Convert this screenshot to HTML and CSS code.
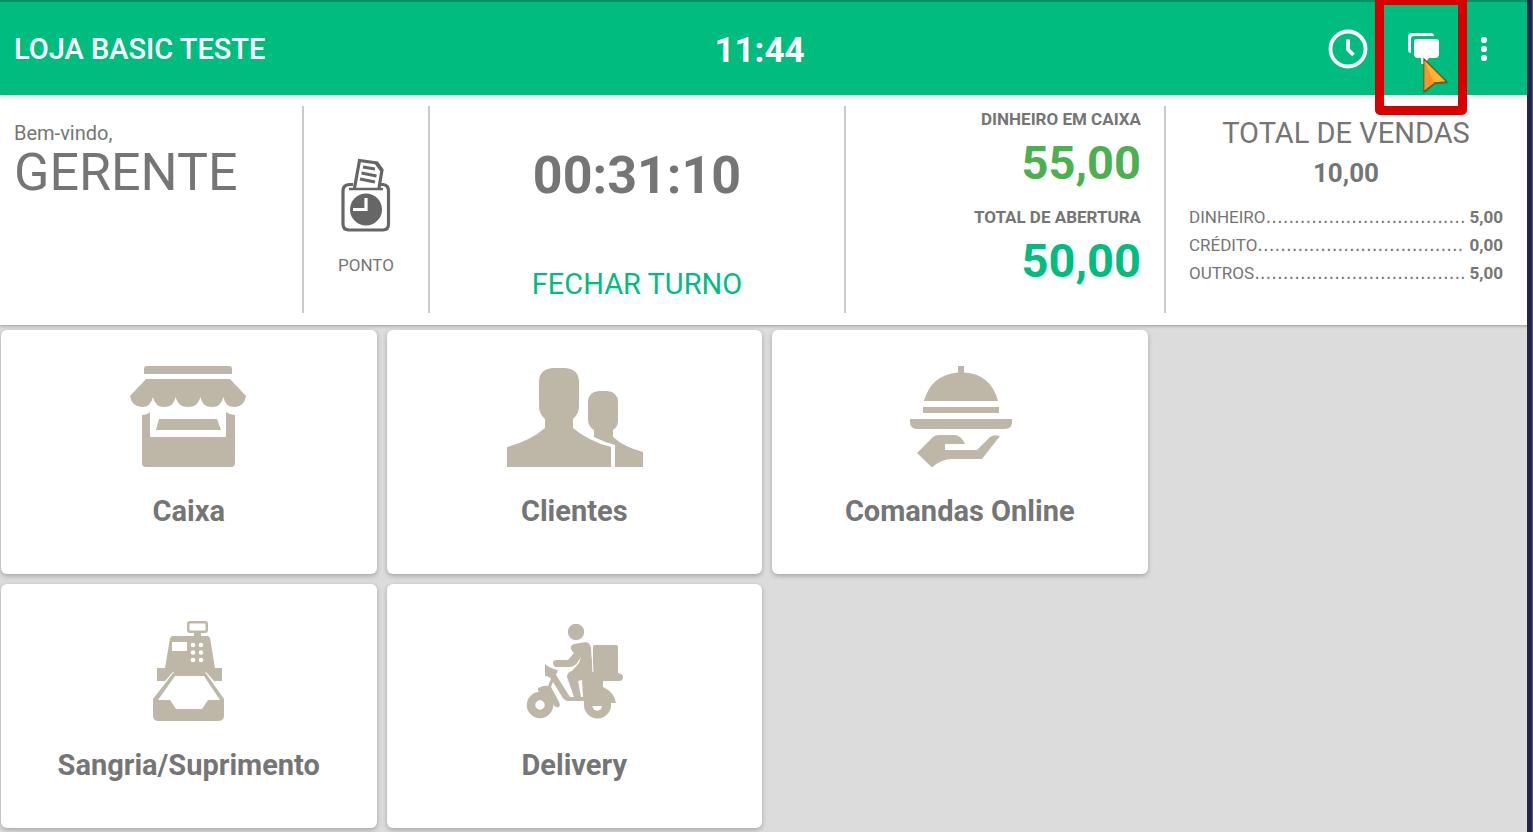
FILE: index.html
```
<!DOCTYPE html>
<html lang="pt-br">

<head>
    <meta charset="UTF-8">
    <meta name="viewport" content="width=device-width, initial-scale=1.0">
    <title>Loja Basic Teste</title>

    <link rel="stylesheet" href="styles.css">
</head>

<body>
    <header class="topo">
        <h1 class="loja">LOJA BASIC TESTE</h1>
        <time class="hora">11:44</time>
        <div class="acoes">
            <button type="button" class="btn-icone" aria-label="Turno">
                <svg width="40" height="40" viewBox="0 0 40 40" fill="none" stroke="#fff">
                    <circle cx="20" cy="20" r="17.500" stroke-width="3.800" />
                    <path d="M20 10.500V20.500L25.500 26" stroke-width="3.800" />
                </svg>
            </button>
            <div class="destaque">
                <button type="button" class="btn-icone" aria-label="Mensagens">
                    <svg width="34" height="34" viewBox="0 0 34 34" fill="#fff">
                        <path d="M1 21V5Q1 1 5 1H24Q27 1 27 4H7Q4 4 4 7V21Q1 21 1 18Z" />
                        <path d="M10 7H29Q32 7 32 10V22Q32 26 28 26H22L17 32H14V26H10Q7 25 7 22V10Q7 7 10 7Z" />
                    </svg>
                </button>
                <svg class="cursor" width="28" height="38" viewBox="0 0 28 38">
                    <path d="M3 3L26 26.500L13 27.500L3 36Z" fill="#1b4d35" opacity=".35" />
                    <path d="M2 2L25 25L12 26L2 34.500Z" fill="#fcb62c" stroke="#76501c" stroke-width="1.300" />
                    <path d="M2.600 4L12 26L2.600 33Z" fill="#f7952a" />
                </svg>
            </div>
            <button type="button" class="btn-icone btn-menu" aria-label="Mais opções">
                <svg width="8" height="26" viewBox="0 0 8 26" fill="#fff">
                    <circle cx="4" cy="4" r="3.100" />
                    <circle cx="4" cy="13" r="3.100" />
                    <circle cx="4" cy="22" r="3.100" />
                </svg>
            </button>
        </div>
    </header>

    <section class="resumo">
        <div class="bloco usuario">
            <p class="saudacao">Bem-vindo,</p>
            <p class="nome">GERENTE</p>
        </div>

        <button type="button" class="bloco ponto">
            <svg width="50" height="74" viewBox="0 0 50 74" fill="none" stroke="#666" stroke-width="3.200">
                <path d="M12 26.500H8Q2 27 2 33V66Q2 72 8 72H42Q47.500 72 47.500 66V33Q47.500 27 42 26.500H39" />
                <path d="M8 31H42" stroke-width="2.600" />
                <path d="M13.500 30L18.500 2.500L36 5L41 12L38 30" />
                <path d="M35 5L41 13" />
                <path d="M22 9L34 11M20.500 15L35.500 18M19 21L34 24" stroke-width="3" />
                <circle cx="25" cy="51.500" r="16" fill="#666" stroke="none" />
                <path d="M25 40V51.500H12" stroke="#fff" stroke-width="3.200" />
            </svg>
            <span>PONTO</span>
        </button>

        <div class="bloco turno">
            <p class="tempo">00:31:10</p>
            <button type="button" class="btn-fechar">FECHAR TURNO</button>
        </div>

        <dl class="bloco valores">
            <dt>DINHEIRO EM CAIXA</dt>
            <dd class="em-caixa">55,00</dd>
            <dt>TOTAL DE ABERTURA</dt>
            <dd class="abertura">50,00</dd>
        </dl>

        <div class="bloco vendas">
            <h2>TOTAL DE VENDAS</h2>
            <p class="total">10,00</p>
            <ul>
                <li><span>DINHEIRO</span><span class="pontos" aria-hidden="true">...................................</span><b>5,00</b></li>
                <li><span>CRÉDITO</span><span class="pontos" aria-hidden="true">....................................</span><b>0,00</b></li>
                <li><span>OUTROS</span><span class="pontos" aria-hidden="true">.....................................</span><b>5,00</b></li>
            </ul>
        </div>
    </section>

    <main class="menu">
        <button type="button" class="cartao">
            <svg width="140" height="104" viewBox="1 0 140 104" fill="#beb7a7">
                <path d="M26 10V5Q26 2 29 2H111Q114 2 114 5V10Z" />
                <path d="M28 15H112L128 32Q126 43 117 43Q107 43 105.500 33Q103 43 94 43Q84 43 82.500 33Q80 43 70 43Q60 43 57.500 33Q56 43 46 43Q37 43 35 33Q33 43 24 43Q14 43 12 32Z" />
                <path d="M24 51Q29 51 32 48V73H108V48Q112 51 117 51V99Q117 103 113 103H28Q24 103 24 99Z" />
                <path d="M41 55H99L103 66H38Z" />
            </svg>
            <span>Caixa</span>
        </button>

        <button type="button" class="cartao">
            <svg width="140" height="104" viewBox="-1 0 140 104" fill="#beb7a7">
                <path d="M48 4H60Q74 5 74 18V42Q74 50 68 55V64Q83 77 106 83V103H2V83Q25 77 40 64V55Q34 50 34 42V18Q34 5 48 4Z" />
                <path d="M94 27H102Q113 28 113 38V57Q113 63 108 66V73Q119 83 138 88V103H110V81Q99 78 89 73V66Q83 62 83 56V38Q83 28 94 27Z" />
            </svg>
            <span>Clientes</span>
        </button>

        <button type="button" class="cartao">
            <svg width="140" height="104" viewBox="-1 0 140 104" fill="#beb7a7">
                <path d="M67 2H73V8.500Q100 10 107 37H33Q40 11 67 8.500Z" />
                <path d="M32 43H108V49H32Z" />
                <path d="M19 55H121V58Q121 65 114 65H26Q19 65 19 58Z" />
                <path d="M26 89L42 73Q44 71 48 71H63Q70 71 74 80H54V86H86L99 73Q103 70 109 72L91 95H61Q50 95 41 103.500Z" />
            </svg>
            <span>Comandas Online</span>
        </button>

        <button type="button" class="cartao inicio-linha">
            <svg width="140" height="104" viewBox="2 -1 140 104" fill="#beb7a7" fill-rule="evenodd">
                <path d="M73 2H88Q91 2 91 5V11Q91 14 88 14H84V17H91L93 19L98 49H105V62H97L89 53H56L48 62H40V49H48L53 19L55 17H77V14H73Q70 14 70 11V5Q70 2 73 2ZM72.500 4.500V11.500H88.500V4.500ZM55 23V32H70V23Z" />
                <g fill="#fff">
                    <circle cx="76" cy="26" r="2.300" />
                    <circle cx="84" cy="26" r="2.300" />
                    <circle cx="76" cy="33.500" r="2.300" />
                    <circle cx="84" cy="33.500" r="2.300" />
                    <circle cx="76" cy="41" r="2.300" />
                    <circle cx="84" cy="41" r="2.300" />
                </g>
                <path d="M57 53H88L107 80V97Q107 102 101 102H42Q36 102 36 97V80ZM58 57L41 81H53L59 90H85L91 81H103L87 57Z" />
            </svg>
            <span>Sangria/Suprimento</span>
        </button>

        <button type="button" class="cartao">
            <svg width="140" height="104" viewBox="-1 0 140 104" fill="#beb7a7">
                <circle cx="71" cy="14" r="8.200" />
                <path d="M69 26L81 24Q85 25 86 30L88 55H98V83H64Q59 83 56 77L48 64L46 69L53 82Q56 87 54 89Q50 90 48 86L45 79Q42 75 37 75Q32 74 33 70Q39 67 43 68L46 61Q44 58 40 58V46Q44 50 53 52L51 57L65 79H69L62 59Q62 54 67 53L74 45L76 39L72 45Q69 49 64 49L51 49Q48 48 48 45Q48 42 52 42L63 42L69 35Q65 32 66 28Z" />
                <path d="M88 29Q88 27 90 27H111Q113 27 113 29V55Q118 56 118 59Q118 63 114 63H98V69Q109 74 111 85H83V55H88Z" />
                <path d="M73 63L76 79H78L77 62Z" fill="#fff" />
                <path d="M87 33L88 54" fill="none" stroke="#fff" />
                <circle cx="35" cy="87" r="9" fill="none" stroke="#beb7a7" stroke-width="8.500" />
                <path d="M79 80H106V87A13.500 13.500 0 0 1 79 87Z" />
                <path d="M87.500 88H97A4.500 4.500 0 0 1 87.500 88Z" fill="#fff" />
            </svg>
            <span>Delivery</span>
        </button>
    </main>

</body>

</html>
```
FILE: styles.css
```
*,
*::before {
    box-sizing: border-box;
}

body {
    margin: 0;
    min-height: 100vh;
    background-color: #dcdcdc;
    color: #757575;
    font-family: Roboto, "Liberation Sans", sans-serif;
}

/* faixa escura na lateral direita */
body::after {
    content: "";
    position: fixed;
    top: 0;
    right: 0;
    bottom: 0;
    width: 5px;
    background-color: #22264a;
    border-right: 1px solid #5c5f78;
}

h1, h2, p, dl, dd, ul {
    margin: 0;
    padding: 0;
    font-weight: normal;
}

button {
    margin: 0;
    padding: 0;
    border: none;
    background: none;
    color: inherit;
    font-family: inherit;
    cursor: pointer;
}

svg {
    display: block;
}

.topo {
    position: relative;
    display: grid;
    grid-template-columns: 1fr auto 1fr;
    align-items: center;
    height: 95px;
    padding: 0 28px 0 14px;
    background-color: #00bc7f;
    border-top: 2px solid #069061;
    box-shadow: 0 2px 6px rgba(0, 0, 0, 0.12);
    color: white;
}

.topo .loja {
    font-size: 29px;
    font-weight: 500;
}

.topo .hora {
    padding-top: 4px;
    font-size: 35px;
    font-weight: bold;
}

.acoes {
    display: flex;
    align-items: center;
    justify-content: flex-end;
}

.btn-menu {
    width: 60px;
    display: flex;
    justify-content: center;
    margin: 0 -9px 0 -13px;
}

.destaque {
    position: relative;
    width: 92px;
    display: flex;
    justify-content: center;
    margin-left: 7px;
    padding-left: 6px;
}

.destaque::before {
    content: "";
    position: absolute;
    top: -36px;
    left: 0;
    right: 0;
    height: 119px;
    border: 9px solid #d90000;
    border-radius: 5px;
    pointer-events: none;
}

.cursor {
    position: absolute;
    top: 25px;
    left: 47px;
}

.resumo {
    display: grid;
    grid-template-columns: 304fr 126fr 416fr 320fr 367fr;
    height: 230px;
    padding: 11px 0 12px;
    background-color: white;
    box-shadow: 0 1px 3px rgba(0, 0, 0, 0.3);
}

.bloco {
    border-right: 2px solid #cbcbcb;
}

.usuario {
    padding: 16px 14px;
}

.saudacao {
    font-size: 20px;
    line-height: 22px;
}

.nome {
    font-size: 52px;
    line-height: 58px;
}

.ponto {
    display: flex;
    flex-direction: column;
    align-items: center;
    gap: 23px;
    padding-top: 52px;
    font-size: 17px;
}

.turno {
    display: flex;
    flex-direction: column;
    align-items: center;
    justify-content: space-between;
    padding: 40px 0 12px;
}

.tempo {
    font-size: 52px;
    line-height: 60px;
    font-weight: bold;
}

.btn-fechar {
    color: #00bc7f;
    font-size: 29px;
}

.valores {
    padding: 3px 23px 0 0;
    text-align: right;
    font-weight: bold;
}

.valores dt {
    font-size: 17px;
    line-height: 20px;
}

.valores dd {
    height: 78px;
    font-size: 47px;
    line-height: 68px;
    font-weight: bold;
}

.em-caixa {
    color: #4caf50;
}

.abertura {
    color: #00bc7f;
}

.vendas {
    padding: 8px 30px 0 23px;
    border-right: none;
    text-align: center;
}

.vendas h2 {
    font-size: 29px;
    line-height: 38px;
}

.vendas .total {
    font-size: 26px;
    line-height: 42px;
    font-weight: bold;
}

.vendas ul {
    padding-top: 9px;
    list-style: none;
    font-size: 17px;
    line-height: 28px;
}

.vendas li {
    display: flex;
}

.vendas .pontos {
    flex: 1;
    overflow: hidden;
    height: 28px;
    font-family: "DejaVu Sans", sans-serif;
    font-size: 18px;
    text-align: left;
    white-space: nowrap;
}

.menu {
    display: grid;
    grid-template-columns: repeat(4, 1fr);
    gap: 10px;
    padding: 5px 0 4px 1px;
}

.cartao {
    display: flex;
    flex-direction: column;
    align-items: center;
    gap: 26px;
    height: 244px;
    padding-top: 34px;
    border-radius: 6px;
    background-color: white;
    box-shadow: 0 2px 5px rgba(0, 0, 0, 0.25);
    font-size: 29px;
    line-height: 34px;
    font-weight: bold;
}

.inicio-linha {
    grid-column-start: 1;
}
```
